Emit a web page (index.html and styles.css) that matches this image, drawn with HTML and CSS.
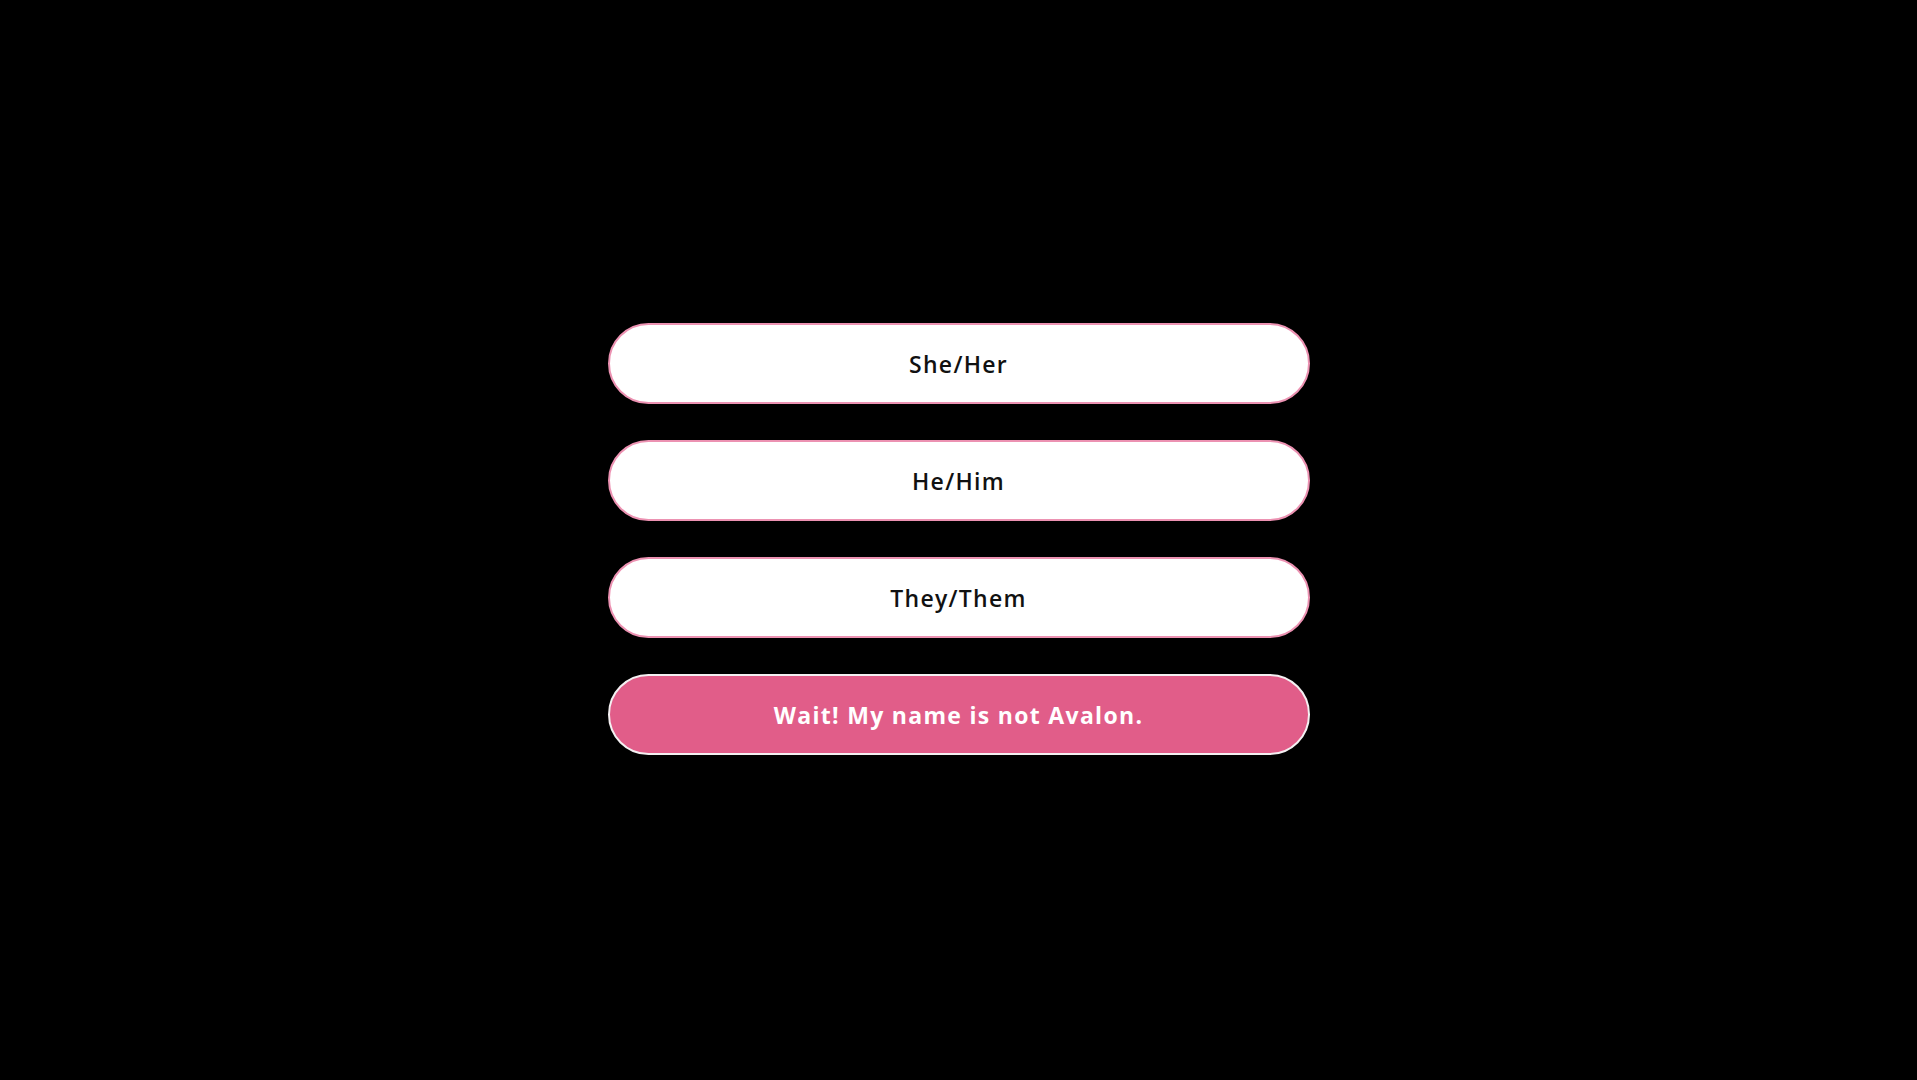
FILE: index.html
```html
<!DOCTYPE html>
<html lang="en">
<head>
<meta charset="utf-8">
<title>Pronouns</title>
<link rel="stylesheet" href="styles.css">
</head>
<body>
<main class="screen">
  <div class="choices">
    <button class="choice">She/Her</button>
    <button class="choice">He/Him</button>
    <button class="choice">They/Them</button>
    <button class="choice choice--alt">Wait! My name is not Avalon.</button>
  </div>
</main>
</body>
</html>
```

FILE: styles.css
```css
html, body {
  margin: 0;
  padding: 0;
  background: #000;
}

.screen {
  width: 100vw;
  height: 100vh;
  display: flex;
  align-items: center;
  justify-content: center;
}

.choices {
  display: flex;
  flex-direction: column;
  gap: 36px;
  width: 702px;
  margin-top: -2px;
}

.choice {
  height: 81px;
  border-radius: 41px;
  border: 2px solid #ec92b2;
  background: #fff;
  color: #111;
  font-family: "Open Sans", "Noto Sans", sans-serif;
  font-weight: 600;
  font-size: 23px;
  letter-spacing: 1.3px;
  padding: 0;
  cursor: pointer;
}

.choice--alt {
  background: #e15d89;
  border-color: #f4f0f2;
  color: #fff;
  font-weight: 700;
}
```
